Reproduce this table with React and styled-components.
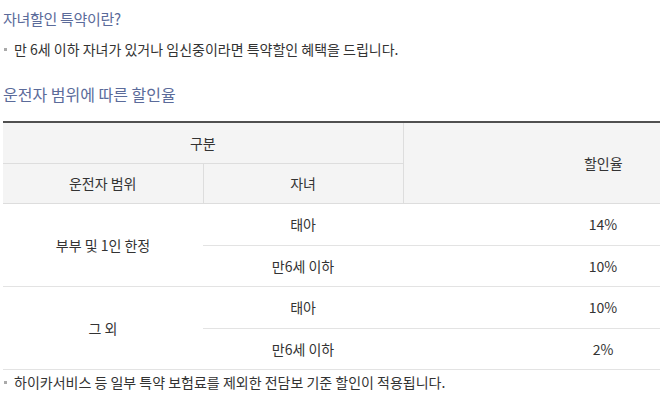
import React from 'react';
import styled, { createGlobalStyle } from 'styled-components';

const GlobalStyle = createGlobalStyle`
  html, body {
    margin: 0;
    padding: 0;
    overflow: hidden;
    background: #ffffff;
  }
  body {
    font-family: "Noto Sans CJK KR", "Noto Sans", sans-serif;
    color: #333333;
  }
`;

const rows = [
  { group: '부부 및 1인 한정', items: [['태아', '14%'], ['만6세 이하', '10%']] },
  { group: '그 외', items: [['태아', '10%'], ['만6세 이하', '2%']] },
];

const App = () => {
  return (
    <Page>
      <GlobalStyle />
      <Title>자녀할인 특약이란?</Title>
      <Bullet>만 6세 이하 자녀가 있거나 임신중이라면 특약할인 혜택을 드립니다.</Bullet>
      <SubTitle>운전자 범위에 따른 할인율</SubTitle>
      <Table>
        <colgroup>
          <col width="200" />
          <col width="200" />
          <col width="400" />
        </colgroup>
        <thead>
          <tr>
            <Th colSpan={2}>구분</Th>
            <Th rowSpan={2} $last>할인율</Th>
          </tr>
          <tr>
            <Th>운전자 범위</Th>
            <Th>자녀</Th>
          </tr>
        </thead>
        <tbody>
          {rows.map((r) =>
            r.items.map(([kid, rate], i) => (
              <tr key={r.group + kid}>
                {i === 0 && <Td rowSpan={r.items.length}>{r.group}</Td>}
                <Td>{kid}</Td>
                <Td>{rate}</Td>
              </tr>
            ))
          )}
        </tbody>
      </Table>
      <Note>하이카서비스 등 일부 특약 보험료를 제외한 전담보 기준 할인이 적용됩니다.</Note>
    </Page>
  );
};

export default App;

const Page = styled.div`
  width: 660px;
  padding: 8px 0 0 3px;
  box-sizing: border-box;
`
const Title = styled.h3`
  margin: 0;
  font-size: 15px;
  font-weight: 400;
  line-height: 22px;
  color: #5b6b9a;
  letter-spacing: -0.3px;
`
const Bullet = styled.p`
  position: relative;
  margin: 9px 0 0;
  padding-left: 11px;
  font-size: 14px;
  line-height: 20px;
  color: #333333;
  letter-spacing: 0;
  &::before {
    content: '';
    position: absolute;
    left: 1px;
    top: 9px;
    width: 3px;
    height: 3px;
    background: #aaaaaa;
  }
`
const SubTitle = styled(Title)`
  margin-top: 24px;
  font-size: 16px;
  letter-spacing: 0;
`
const Table = styled.table`
  margin-top: 16px;
  width: 800px;
  table-layout: fixed;
  border-collapse: collapse;
  border-top: 2px solid #505050;
  font-size: 14px;
  color: #333333;
`
const Th = styled.th`
  height: 39.5px;
  padding: 0;
  font-weight: 400;
  background: #f4f4f4;
  border-bottom: 1px solid #dddddd;
  border-right: ${(p) => (p.$last ? 'none' : '1px solid #dddddd')};
  text-align: center;
`
const Td = styled.td`
  height: 40.5px;
  padding: 0;
  text-align: center;
  border-bottom: 1px solid #e3e3e3;
`
const Note = styled(Bullet)`
  margin-top: 2px;
`
